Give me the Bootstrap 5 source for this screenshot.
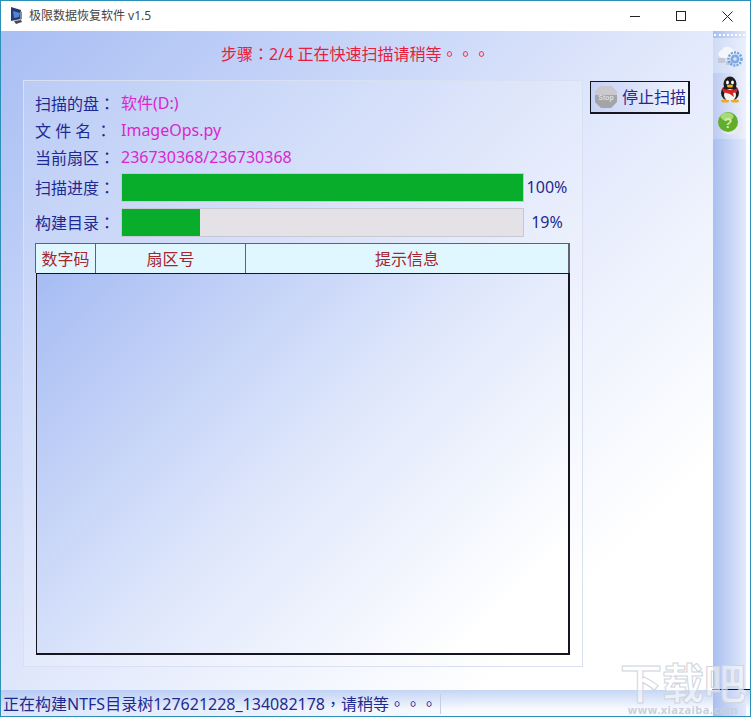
<!DOCTYPE html>
<html lang="en">

<head>
    <meta charset="UTF-8">
    <title>极限数据恢复软件 v1.5</title>
    <link href="https://cdn.jsdelivr.net/npm/bootstrap@5.3.0/dist/css/bootstrap.min.css" rel="stylesheet">
    <style>
        html, body {
            height: 100%;
            margin: 0;
            overflow: hidden;
        }

        body {
            font-family: "Noto Sans", "Noto Sans CJK SC", sans-serif;
            font-size: 16px;
        }

        /* centred full-width punctuation, as the original font draws it */
        .tc-punct {
            font-family: "Noto Sans CJK TC", sans-serif;
        }

        .app-window {
            width: 751px;
            height: 717px;
            border: 1px solid #2c8fb8;
            background: linear-gradient(135deg, #a6bcf3 0%, #e2e9fc 50%, #ffffff 80%);
            position: relative;
        }

        .title-bar {
            height: 30px;
            background: #fff;
            color: #444;
            font-size: 12px;
        }

        .win-btn {
            width: 46px;
            height: 30px;
        }

        .main-area {
            height: 659px;
        }

        .work-col {
            width: 711px;
        }

        .step-line {
            height: 49px;
            padding-top: 11px;
            padding-left: 220px;
            color: #e6203c;
            font-size: 16px;
            line-height: 22px;
        }

        .scan-panel {
            width: 560px;
            height: 587px;
            margin-left: 22px;
            border: 1px solid #d9e0f2;
            background: rgba(255, 255, 255, .16);
            padding: 9px 12px 0 11px;
        }

        .info-row {
            height: 27px;
            line-height: 27px;
            color: #1f2a90;
            font-size: 16px;
        }

        .info-label {
            width: 86px;
            flex-shrink: 0;
            white-space: pre;
        }

        .info-value {
            color: #d926cf;
        }

        .bar-row {
            height: 35px;
            padding: 2px 0 4px;
        }

        .bar-track {
            width: 403px;
            height: 29px;
            flex-shrink: 0;
            border-radius: 0;
            background: #e4e2e6;
            border: 1px solid #c6c8d2;
        }

        .bar-track .progress-bar {
            background: #08ad2c;
        }

        .bar-text {
            color: #1f2a90;
            width: 46px;
            text-align: center;
        }

        .data-head {
            width: 535px;
            height: 30px;
            margin-top: 2px;
            background: #e1f7ff;
            color: #a5262c;
            font-size: 16px;
            border: 1px solid #5d6470;
            border-width: 1px 2px 0 1px;
        }

        .head-cell {
            line-height: 30px;
            text-align: center;
            border-right: 1px solid #5d6470;
        }

        .head-cell:last-child {
            border-right: 0;
        }

        .data-body {
            width: 534px;
            height: 382px;
            margin-left: 1px;
            border: 2px solid #15151f;
            border-width: 1px 2px 2px 1px;
            background: linear-gradient(135deg, #a6bcf3 0%, #dfe7fb 50%, #ffffff 88%);
        }

        .stop-btn {
            width: 100px;
            height: 33px;
            margin: 50px 0 0 7px;
            padding: 0 0 0 3px;
            border-radius: 0;
            border: 2px solid #15151f;
            border-width: 1px 2px 2px 1px;
            background: linear-gradient(90deg, #c6d2f5, #f4f6fe);
            color: #1f2a90;
            font-size: 16px;
        }

        .side-wrap {
            width: 38px;
            height: 659px;
            border-bottom: 1px solid #15151f;
        }

        .side-bar {
            width: 33px;
            margin-left: 1px;
            background: linear-gradient(90deg, #a9bff0, #e2e9fb);
        }

        .side-strip {
            width: 4px;
            background: #fff;
        }

        .side-dots {
            height: 7px;
            margin: 0 1px;
            padding-top: 3px;
        }

        .side-dots div {
            border-top: 2px dotted #fff;
        }

        .side-item {
            height: 33px;
            background: linear-gradient(90deg, #bccbf1, #eef2fd);
        }

        .side-item-top {
            height: 35px;
            background: linear-gradient(90deg, #cfdbf5, #e9effc);
        }

        .status-bar {
            height: 26px;
            background: linear-gradient(180deg, rgba(150, 180, 238, .55), rgba(170, 195, 240, .08) 75%);
            color: #1f2a90;
            font-size: 16px;
            line-height: 26px;
            padding-left: 2px;
        }

        .status-sep {
            width: 1px;
            height: 20px;
            background: #c3cde8;
            margin-left: 3px;
        }

        .status-tail {
            width: 33px;
            margin-right: 4px;
            background: linear-gradient(90deg, #a9bff0, #e2e9fb);
        }

        .wm-logo {
            position: absolute;
            right: 3px;
            bottom: 0;
            width: 128px;
            color: rgba(255, 255, 255, .5);
            text-align: center;
        }

        .wm-big {
            font-size: 42px;
            line-height: 42px;
            height: 42px;
            font-weight: 700;
            -webkit-text-stroke: 1px #cfd4dd;
        }

        .wm-url {
            font-size: 11px;
            line-height: 12px;
            font-weight: 700;
            letter-spacing: .5px;
            color: #c9d0dc;
        }
    </style>
</head>

<body>
    <div class="app-window">
        <div class="title-bar d-flex align-items-center">
            <svg class="ms-2" width="16" height="18" viewBox="0 0 16 18">
                <path d="M2 0l10 3v9L2 14z" fill="#263a70"/>
                <path d="M4 4l7 2-1 4-5 1z" fill="#4f86d8"/>
                <path d="M11 4l2 1v7l-2 1z" fill="#7c8ba8"/>
                <path d="M5 14l7-1 1 2-6 2z" fill="#454a55"/>
            </svg>
            <span class="ms-1 flex-grow-1">极限数据恢复软件 v1.5</span>
            <div class="win-btn d-flex align-items-center justify-content-center">
                <svg width="11" height="11"><path d="M0 5.5h10" stroke="#222"/></svg>
            </div>
            <div class="win-btn d-flex align-items-center justify-content-center">
                <svg width="11" height="11"><rect x=".5" y=".5" width="9" height="9" fill="none" stroke="#222"/></svg>
            </div>
            <div class="win-btn d-flex align-items-center justify-content-center">
                <svg width="11" height="11"><path d="M.5.5l10 10M10.5.5l-10 10" stroke="#222"/></svg>
            </div>
        </div>

        <div class="main-area d-flex">
            <div class="work-col">
                <div class="d-flex">
                    <div>
                        <div class="step-line text-nowrap">步骤<span class="tc-punct">：</span>2/4 正在快速扫描请稍等<span class="tc-punct">。。。</span></div>
                        <div class="scan-panel">
                            <div class="info-row d-flex"><span class="info-label">扫描的盘<span class="tc-punct">：</span></span><span class="info-value">软件(D:)</span></div>
                            <div class="info-row d-flex"><span class="info-label">文 件 名 <span class="tc-punct">：</span></span><span class="info-value">ImageOps.py</span></div>
                            <div class="info-row d-flex"><span class="info-label">当前扇区<span class="tc-punct">：</span></span><span class="info-value">236730368/236730368</span></div>
                            <div class="bar-row info-row d-flex align-items-center">
                                <span class="info-label">扫描进度<span class="tc-punct">：</span></span>
                                <div class="progress bar-track"><div class="progress-bar" style="width: 100%"></div></div>
                                <span class="bar-text">100%</span>
                            </div>
                            <div class="bar-row info-row d-flex align-items-center">
                                <span class="info-label">构建目录<span class="tc-punct">：</span></span>
                                <div class="progress bar-track"><div class="progress-bar" style="width: 19.4%"></div></div>
                                <span class="bar-text">19%</span>
                            </div>
                            <div class="data-head d-flex">
                                <div class="head-cell" style="width: 60px">数字码</div>
                                <div class="head-cell" style="width: 150px">扇区号</div>
                                <div class="head-cell flex-grow-1">提示信息</div>
                            </div>
                            <div class="data-body"></div>
                        </div>
                    </div>
                    <button type="button" class="btn stop-btn d-flex align-items-center gap-1 text-nowrap">
                        <svg width="24" height="24" viewBox="0 0 24 24">
                            <path d="M7 1h10l6 6v10l-6 6H7l-6-6V7z" fill="#a3a3a8"/>
                            <path d="M7 1h10l6 6v3H1V7z" fill="#c9c9ce"/>
                            <text x="12" y="15" font-size="7" font-family="Liberation Sans" font-weight="700" text-anchor="middle" fill="#dedee2">Stop</text>
                        </svg>
                        停止扫描
                    </button>
                </div>
            </div>
            <div class="side-wrap d-flex">
                <div class="side-bar">
                    <div class="side-dots"><div></div></div>
                    <div class="side-item side-item-top d-flex align-items-center justify-content-center">
                        <svg width="27" height="24" viewBox="0 0 27 24">
                            <path d="M3 12a4 4 0 0 1 3-6 6 6 0 0 1 10-1 4 4 0 0 1 3 6l-3 3H6z" fill="#f4f6fb"/>
                            <path d="M2 14h7v5H2zM10 17h6v4h-6z" fill="#c3c9d6"/>
                            <circle cx="19" cy="15" r="6.5" fill="none" stroke="#74a2de" stroke-width="2.5" stroke-dasharray="2 1.2"/>
                            <circle cx="19" cy="15" r="4.5" fill="#7eabe4"/>
                            <circle cx="19" cy="15" r="1.8" fill="#dbe7f8"/>
                        </svg>
                    </div>
                    <div class="side-item d-flex align-items-center justify-content-center">
                        <svg width="22" height="27" viewBox="0 0 22 27">
                            <ellipse cx="11" cy="8" rx="6.5" ry="7.5" fill="#1d1d1f"/>
                            <ellipse cx="11" cy="17" rx="9" ry="8" fill="#1d1d1f"/>
                            <ellipse cx="11" cy="19" rx="6" ry="6" fill="#f4f4f4"/>
                            <ellipse cx="8.5" cy="6.5" rx="1.4" ry="2" fill="#fff"/>
                            <ellipse cx="13.5" cy="6.5" rx="1.4" ry="2" fill="#fff"/>
                            <ellipse cx="11" cy="10" rx="3" ry="1.5" fill="#f2b31c"/>
                            <path d="M3 12q8 4 16 0l-1 4-4 1 1 4-4-3-7-2z" fill="#d8231f"/>
                            <ellipse cx="6" cy="25" rx="4" ry="1.5" fill="#f2a81c"/>
                            <ellipse cx="16" cy="25" rx="4" ry="1.5" fill="#f2a81c"/>
                        </svg>
                    </div>
                    <div class="side-item d-flex align-items-center justify-content-center">
                        <svg width="26" height="25" viewBox="0 0 26 25">
                            <ellipse cx="15" cy="19" rx="10.5" ry="5.5" fill="#e8eaf0"/>
                            <circle cx="11" cy="12" r="10" fill="#62ae2a"/>
                            <ellipse cx="10" cy="6.5" rx="6.5" ry="4" fill="#a9da78"/>
                            <text x="11" y="18" font-size="14" font-family="Liberation Sans" font-weight="700" text-anchor="middle" fill="#cfeca9">?</text>
                        </svg>
                    </div>
                </div>
                <div class="side-strip"></div>
            </div>
        </div>

        <div class="status-bar d-flex text-nowrap">
            <span>正在构建NTFS目录树127621228_134082178<span class="tc-punct">，</span>请稍等<span class="tc-punct">。。。</span></span>
            <span class="status-sep mt-1"></span>
            <span class="status-tail ms-auto"></span>
        </div>

        <div class="wm-logo">
            <div class="wm-big">下载吧</div>
            <div class="wm-url">www.xiazaiba.com</div>
        </div>
    </div>

    <script src="https://cdn.jsdelivr.net/npm/bootstrap@5.3.0/dist/js/bootstrap.bundle.min.js"></script>
</body>

</html>
